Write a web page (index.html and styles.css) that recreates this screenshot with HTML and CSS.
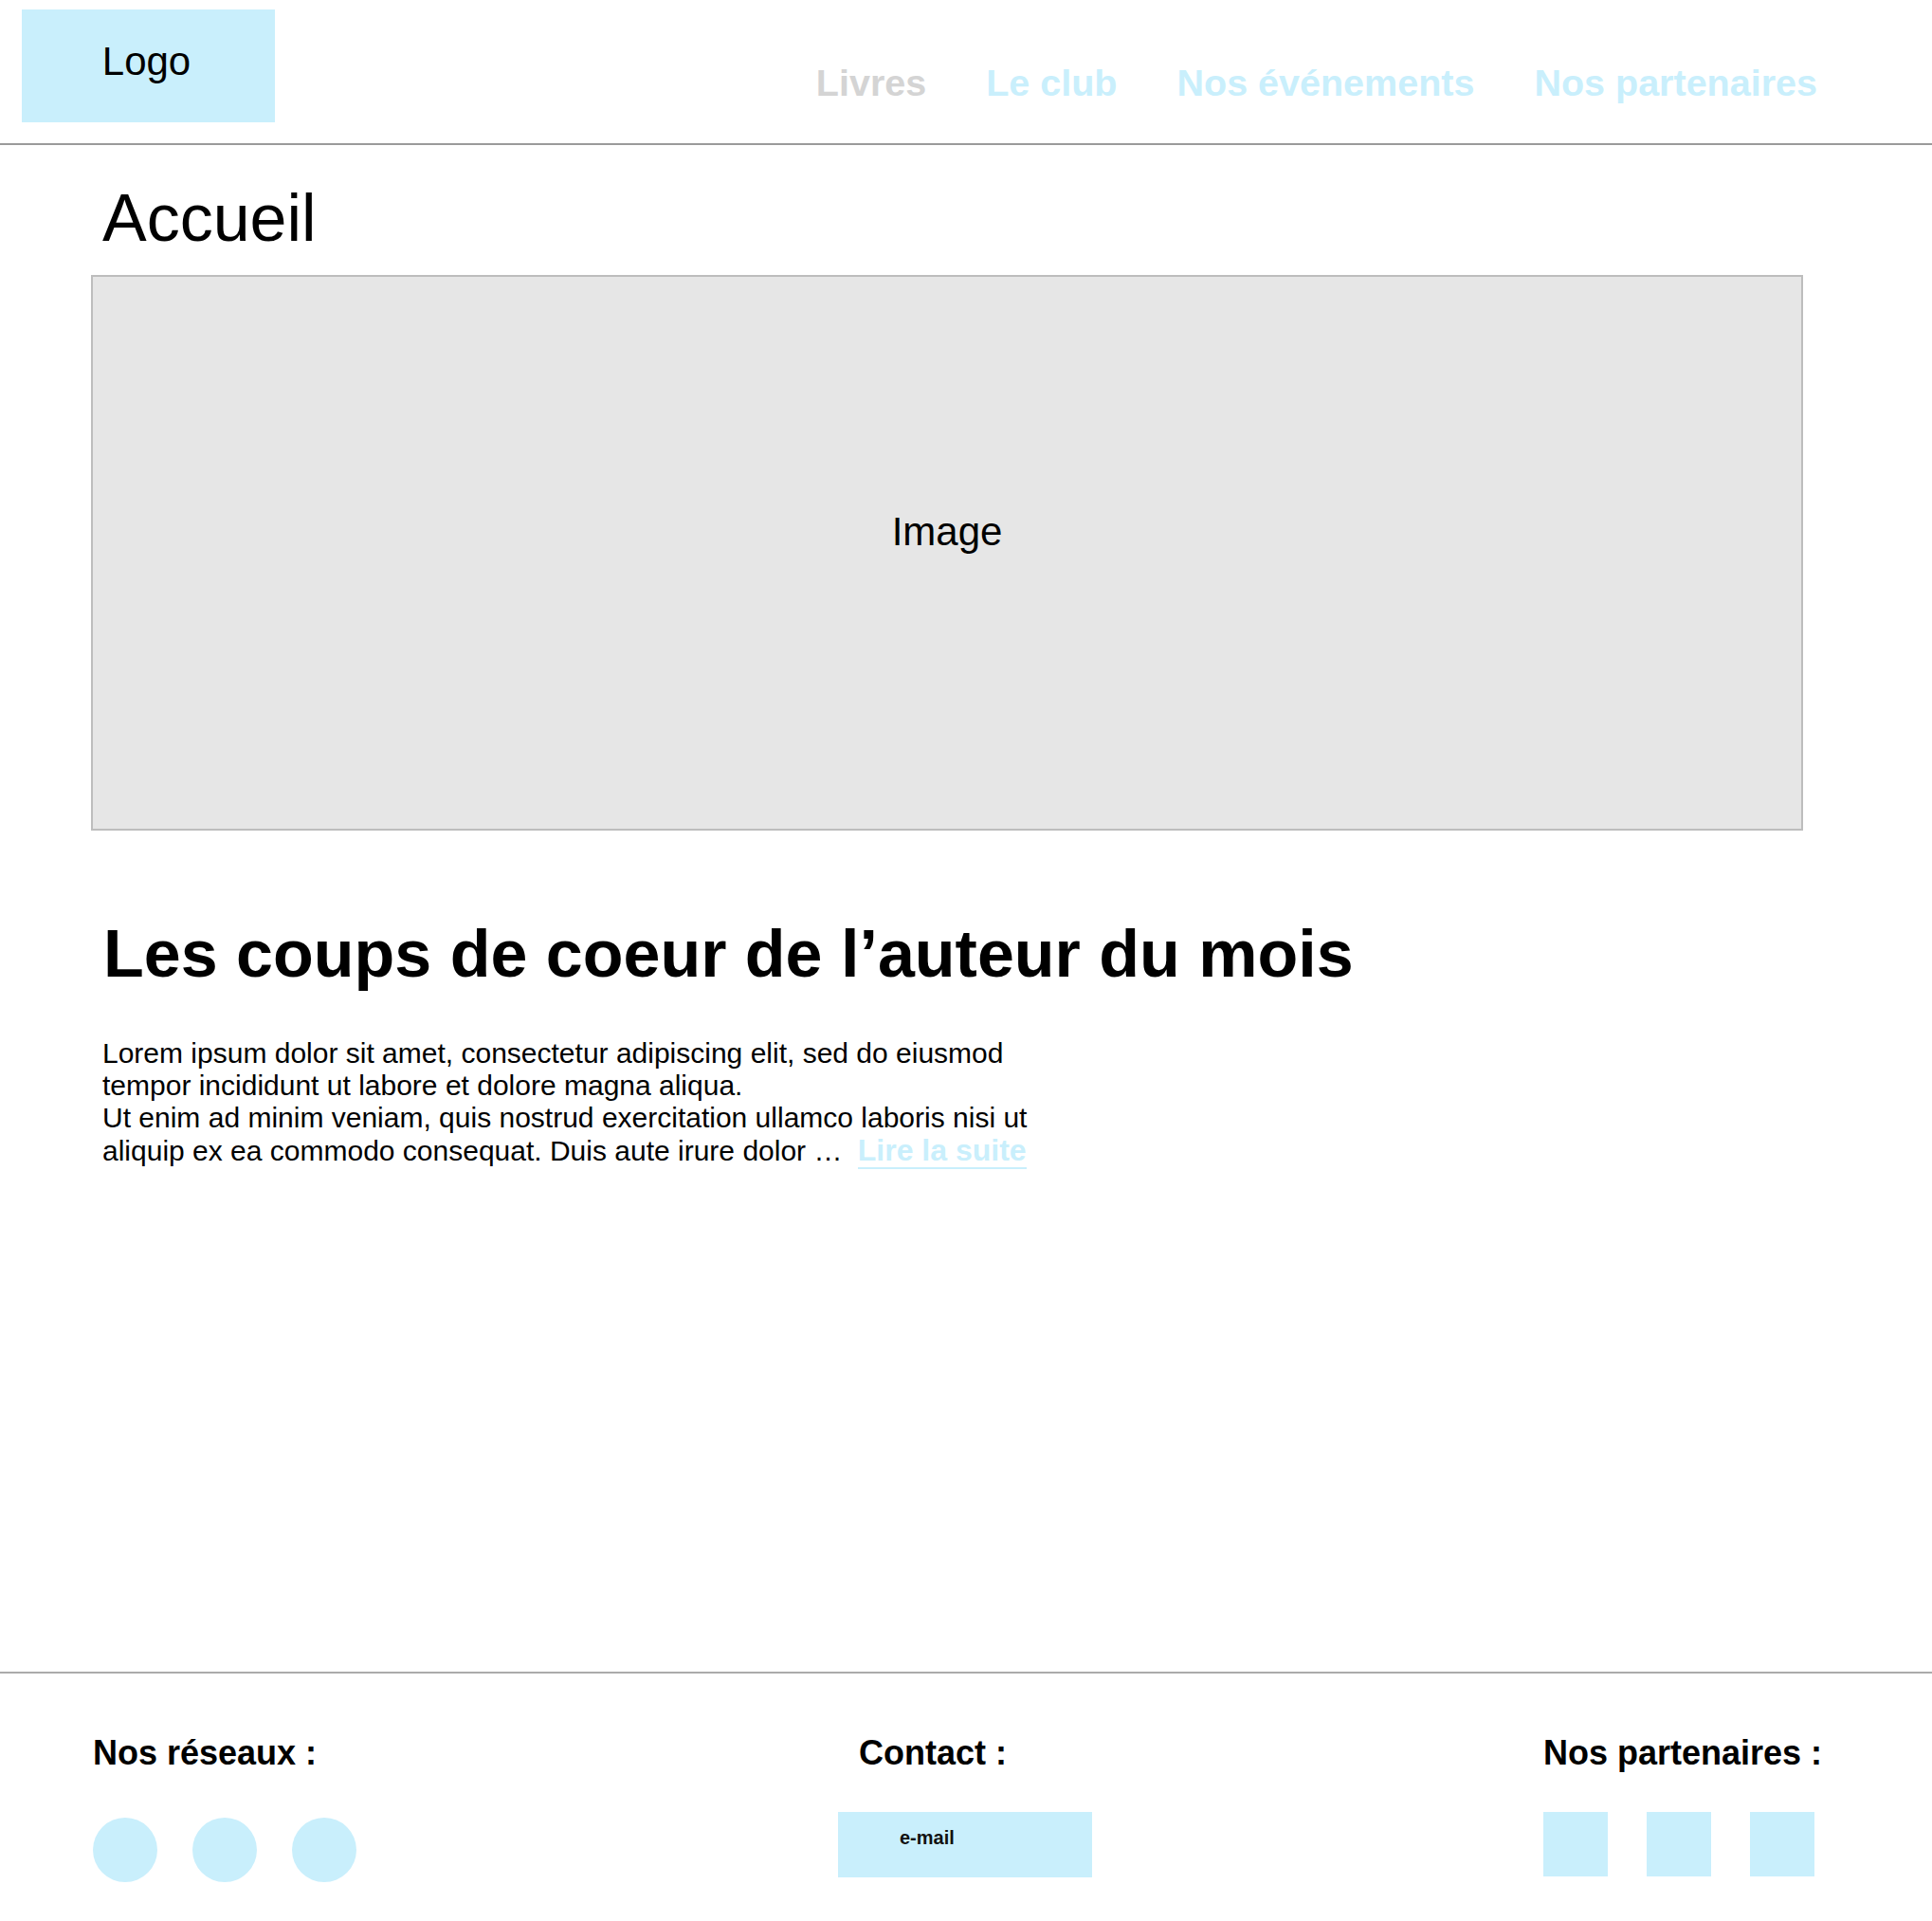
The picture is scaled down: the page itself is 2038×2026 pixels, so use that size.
FILE: index.html
```html
<!DOCTYPE html>
<html lang="fr">
<head>
<meta charset="utf-8">
<title>Accueil</title>
<link rel="stylesheet" href="styles.css">
</head>
<body>
<header class="site-header">
  <div class="logo">Logo</div>
  <nav class="nav">
    <a class="nav-link nav-link--muted" href="#">Livres</a>
    <a class="nav-link" href="#">Le club</a>
    <a class="nav-link" href="#">Nos événements</a>
    <a class="nav-link" href="#">Nos partenaires</a>
  </nav>
</header>

<main class="main">
  <h1 class="page-title">Accueil</h1>
  <div class="hero">Image</div>
  <h2 class="section-title">Les coups de coeur de l’auteur du mois</h2>
  <p class="intro">Lorem ipsum dolor sit amet, consectetur adipiscing elit, sed do eiusmod<br>tempor incididunt ut labore et dolore magna aliqua.<br>Ut enim ad minim veniam, quis nostrud exercitation ullamco laboris nisi ut<br>aliquip ex ea commodo consequat. Duis aute irure dolor … <a class="more" href="#">Lire la suite</a></p>
</main>

<footer class="site-footer">
  <div class="col col--social">
    <h3 class="col-title">Nos réseaux :</h3>
    <div class="items items--social">
      <span class="circle"></span>
      <span class="circle"></span>
      <span class="circle"></span>
    </div>
  </div>
  <div class="col col--contact">
    <h3 class="col-title col-title--contact">Contact :</h3>
    <div class="items">
      <div class="email">e-mail</div>
    </div>
  </div>
  <div class="col col--partners">
    <h3 class="col-title">Nos partenaires :</h3>
    <div class="items items--partners">
      <span class="square"></span>
      <span class="square"></span>
      <span class="square"></span>
    </div>
  </div>
</footer>
</body>
</html>
```

FILE: styles.css
```css
* { box-sizing: border-box; }

html, body {
  margin: 0;
  padding: 0;
}

body {
  font-family: "Liberation Sans", Arial, sans-serif;
  color: #000;
  background: #fff;
  min-height: 100vh;
  display: flex;
  flex-direction: column;
}

/* Header */
.site-header {
  display: flex;
  align-items: flex-start;
  height: 153px;
  padding: 10px 121px 0 23px;
  border-bottom: 2px solid #9a9a9a;
}

.logo {
  width: 267px;
  height: 119px;
  background: #c9effc;
  font-size: 42px;
  line-height: 48px;
  padding: 31px 4px 0 0;
  text-align: center;
}

.nav {
  margin-left: auto;
  margin-top: 55px;
  display: flex;
  gap: 63px;
}

.nav-link {
  font-size: 39.5px;
  font-weight: bold;
  line-height: 45px;
  color: #c9effc;
  text-decoration: none;
}

.nav-link--muted { color: #d4d4d4; }

/* Main */
.main {
  flex: 1;
  padding: 0 136px 0 96px;
}

.page-title {
  margin: 37px 0 0 12px;
  font-size: 70px;
  font-weight: normal;
  line-height: 80px;
}

.hero {
  margin-top: 20px;
  height: 586px;
  background: #e6e6e6;
  border: 2px solid #bdbdbd;
  text-align: center;
  font-size: 42px;
  line-height: 48px;
  padding-top: 245px;
}

.section-title {
  margin: 90px 0 0 13px;
  font-size: 70px;
  font-weight: bold;
  line-height: 80px;
}

.intro {
  margin: 48px 0 0 12px;
  font-size: 30px;
  line-height: 34px;
  width: 1100px;
}

.more {
  margin-left: 8px;
  font-size: 32px;
  font-weight: bold;
  color: #c9effc;
  text-decoration: none;
  border-bottom: 2px solid #c9effc;
}

/* Footer */
.site-footer {
  display: grid;
  grid-template-columns: 786px 744px auto;
  border-top: 2px solid #ababab;
  padding: 63px 0 41px 98px;
}

.col-title {
  margin: 0;
  font-size: 36px;
  font-weight: bold;
  line-height: 41px;
}

.col-title--contact { padding-left: 22px; }

.items {
  display: flex;
  margin-top: 42px;
}

.items--social {
  margin-top: 48px;
  gap: 37px;
}

.items--partners { gap: 41px; }

.circle {
  width: 68px;
  height: 68px;
  border-radius: 50%;
  background: #c9effc;
}

.square {
  width: 68px;
  height: 68px;
  background: #c9effc;
}

.email {
  width: 268px;
  height: 69px;
  background: #c9effc;
  font-size: 20px;
  font-weight: bold;
  line-height: 23px;
  padding: 16px 0 0 65px;
  color: #111;
}
```
